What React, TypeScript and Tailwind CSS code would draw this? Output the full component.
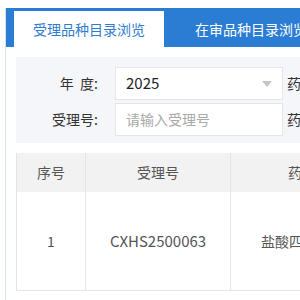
const App = () => {
  return (
    <div
      className="w-[300px] h-[300px] overflow-hidden bg-white pl-[5px] pt-[8px]"
      style={{ fontFamily: '"Noto Sans CJK SC", sans-serif' }}
    >
      <div className="w-[600px] h-[300px] border-l border-[#d6e2ee]">
        {/* Tabs bar */}
        <div className="flex h-[39px] bg-[#2b7dd3] pl-[8px] pt-[3px]">
          <div className="flex h-[36px] w-[150px] items-center justify-center bg-white text-[14px] text-[#2f7dcc]">
            受理品种目录浏览
          </div>
          <div className="flex h-[36px] items-center pl-[31px] text-[14px] text-white">
            在审品种目录浏览
          </div>
        </div>

        <div className="pl-[10px] pt-[10px]">
          {/* Search form */}
          <div className="flex h-[86px] w-[590px] flex-col gap-[3px] bg-[#f5f6f9] pt-[10px] text-[14px] text-[#333]">
            <div className="flex h-[33px] items-center">
              <span className="w-[82px] text-right">年&nbsp;&nbsp;度:</span>
              <div className="ml-[17px] flex h-[33px] w-[168px] items-center justify-between border border-[#e6e6e6] bg-white pl-[10px] pr-[10px]">
                <span className="text-[15px] text-[#222]">2025</span>
                <span className="h-0 w-0 border-l-[5px] border-r-[5px] border-t-[6px] border-l-transparent border-r-transparent border-t-[#c4c4c4]" />
              </div>
              <span className="ml-[4px]">药品名称:</span>
            </div>
            <div className="flex h-[33px] items-center">
              <span className="w-[82px] text-right">受理号:</span>
              <div className="ml-[17px] flex h-[33px] w-[168px] items-center border border-[#e6e6e6] bg-white pl-[10px]">
                <span className="text-[#a9a9a9]">请输入受理号</span>
              </div>
              <span className="ml-[4px]">药品类型:</span>
            </div>
          </div>

          {/* Table */}
          <div className="mt-[10px] flex w-[590px] flex-col border-b border-l border-[#e4e4e4] text-[14px] text-[#555]">
            <div className="flex h-[39px] bg-[#f2f2f2]">
              <div className="flex w-[69px] items-center justify-center border-r border-[#e4e4e4]">序号</div>
              <div className="flex w-[145px] items-center justify-center border-r border-[#e4e4e4]">受理号</div>
              <div className="flex w-[170px] items-center justify-center">药品名称</div>
            </div>
            <div className="flex h-[98px] bg-white">
              <div className="flex w-[69px] items-center justify-center border-r border-[#e4e4e4]">1</div>
              <div className="flex w-[145px] items-center justify-center border-r border-[#e4e4e4] text-[15px]">CXHS2500063</div>
              <div className="flex w-[172px] items-center justify-center">盐酸四环素注射液</div>
            </div>
          </div>
        </div>
      </div>
    </div>
  );
};

export default App;
